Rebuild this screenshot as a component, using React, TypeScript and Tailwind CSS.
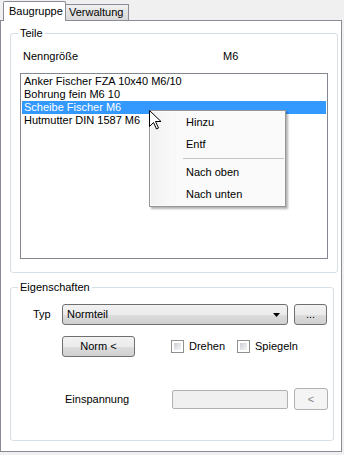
const items = ["Anker Fischer FZA 10x40 M6/10", "Bohrung fein M6 10", "Scheibe Fischer M6", "Hutmutter DIN 1587 M6"];
const selected = 2;

const btn =
  "flex items-center justify-center h-[21px] rounded-[3px] border border-[#707070] bg-[linear-gradient(#f2f2f2_0%,#ebebeb_50%,#dddddd_51%,#cfcfcf_100%)] text-black";

function Check({ label }: { label: string }) {
  return (
    <label className="flex items-center gap-[5px] w-[66px]">
      <span className="w-[13px] h-[13px] border border-[#8e8f8f] bg-white p-[2px]">
        <span className="block w-full h-full bg-[linear-gradient(135deg,#cbcfd5,#f6f6f6)]" />
      </span>
      <span>{label}</span>
    </label>
  );
}

function Group({ title, className, children }: { title: string; className: string; children: any }) {
  return (
    <fieldset className={"border border-[#d5dfe5] rounded-[3px] ml-[9px] w-[324px] " + className}>
      <legend className="ml-[7px] px-[2px] leading-[13px]">{title}</legend>
      {children}
    </fieldset>
  );
}

export default function App() {
  return (
    <div className="w-[344px] h-[455px] bg-[#f0f0f0] text-[11px] leading-[13px] text-black relative" style={{ fontFamily: '"Liberation Sans", Arial, sans-serif' }}>
      {/* tabs */}
      <div className="flex items-end h-[20px] pl-[3px]">
        <div className="relative top-[1px] z-10 h-[20px] w-[63px] bg-white border border-b-0 border-[#898c95] rounded-t-[2px] flex items-center pl-[5px]">
          Baugruppe
        </div>
        <div className="h-[16px] w-[63px] border border-l-0 border-b-0 border-[#898c95] bg-[linear-gradient(#f2f2f2,#e3e3e3_50%,#d9d9d9)] flex items-center pl-[3px]">
          Verwaltung
        </div>
      </div>

      {/* panel */}
      <div className="w-[342px] h-[432px] bg-white border border-[#898c95] flex flex-col">
        <Group title="Teile" className="mt-[6px] h-[246px]">
          <div className="px-[9px]">
            <div className="flex mt-[10px] pl-[3px]">
              <span className="w-[200px]">Nenngröße</span>
              <span>M6</span>
            </div>
            <div className="mt-[10px] w-[308px] h-[186px] border border-[#828790] pt-[1px] px-[1px]">
              {items.map((it, i) => (
                <div key={it} className={"h-[13px] pl-[2px] " + (i === selected ? "bg-[#3399ff] text-white" : "")}>
                  {it}
                </div>
              ))}
            </div>
          </div>
        </Group>

        <Group title="Eigenschaften" className="mt-[8px] h-[160px]">
          <div className="pl-[22px]">
            <div className="flex items-center mt-[10px]">
              <span className="w-[29px]">Typ</span>
              <div className="flex items-center justify-between w-[226px] h-[21px] rounded-[3px] border border-[#707070] bg-[linear-gradient(#f2f2f2_0%,#ebebeb_50%,#dddddd_51%,#cfcfcf_100%)] pl-[4px] pr-[7px]">
                <span>Normteil</span>
                <svg width="7" height="4" viewBox="0 0 7 4"><path d="M0 0h7L3.5 4z" fill="#000" /></svg>
              </div>
              <div className={btn + " w-[33px] ml-[6px]"}>...</div>
            </div>
            <div className="flex items-center mt-[11px] ml-[29px]">
              <div className={btn + " w-[73px]"}>Norm &lt;</div>
              <div className="ml-[36px]">
                <Check label="Drehen" />
              </div>
              <div>
                <Check label="Spiegeln" />
              </div>
            </div>
            <div className="flex items-center mt-[31px] ml-[32px]">
              <span className="w-[107px]">Einspannung</span>
              <div className="w-[116px] h-[19px] rounded-[2px] border border-[#adb2b5] bg-[#f0f0f0]" />
              <div className="ml-[6px] w-[34px] h-[22px] rounded-[3px] border border-[#adb2b5] bg-[#f4f4f4] flex items-center justify-center text-[#838383]">&lt;</div>
            </div>
          </div>
        </Group>
      </div>

      {/* context menu */}
      <div className="absolute left-[149px] top-[110px] w-[137px] h-[97px] border border-[#979797] bg-[#fafafa] shadow-[2px_2px_2px_rgba(0,0,0,0.3)] py-[1px] px-[1px] flex">
        <div className="w-[24px] h-full bg-[linear-gradient(90deg,#f1f1f1,#fafafa)] border-r border-[#f5f5f5]" />
        <div className="flex-1 flex flex-col">
          <div className="h-[22px] flex items-center pl-[11px]">Hinzu</div>
          <div className="h-[22px] flex items-center pl-[11px]">Entf</div>
          <div className="h-[6px] flex items-center pl-[8px]">
            <div className="w-full border-t border-[#c5c5c5]" />
          </div>
          <div className="h-[22px] flex items-center pl-[11px]">Nach oben</div>
          <div className="h-[22px] flex items-center pl-[11px]">Nach unten</div>
        </div>
      </div>

      {/* mouse pointer */}
      <svg className="absolute left-[149px] top-[110px]" width="13" height="20" viewBox="0 0 13 20">
        <path d="M0.5 0.5 L0.5 16.5 L4.5 12.5 L7.5 19 L9.5 18 L6.5 11.5 L12 11.5 Z" fill="#fff" stroke="#000" strokeWidth="1" />
      </svg>
    </div>
  );
}
